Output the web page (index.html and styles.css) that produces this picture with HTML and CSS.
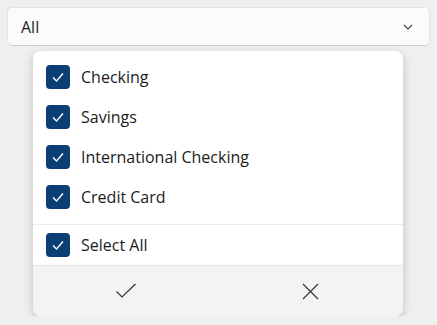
FILE: index.html
```html
<!DOCTYPE html>
<html lang="en">
<head>
    <meta charset="UTF-8">
    <meta name="viewport" content="width=device-width, initial-scale=1.0">
    <title>Account Filter</title>
    <link rel="stylesheet" href="styles.css">
</head>
<body>
    <div class="combo">
        <span class="combo-value">All</span>
        <svg class="chevron" width="12" height="8" viewBox="0 0 12 8">
            <path d="M2 2 L6 6 L10 2" fill="none" stroke="#444" stroke-width="1.2"/>
        </svg>
    </div>

    <div class="popup">
        <div class="options">
            <div class="option"><span class="box"><svg width="14" height="12" viewBox="0 0 14 12"><path d="M2 6.5 L5.5 10 L12 2.5" fill="none" stroke="#fff" stroke-width="1.4"/></svg></span>Checking</div>
            <div class="option"><span class="box"><svg width="14" height="12" viewBox="0 0 14 12"><path d="M2 6.5 L5.5 10 L12 2.5" fill="none" stroke="#fff" stroke-width="1.4"/></svg></span>Savings</div>
            <div class="option"><span class="box"><svg width="14" height="12" viewBox="0 0 14 12"><path d="M2 6.5 L5.5 10 L12 2.5" fill="none" stroke="#fff" stroke-width="1.4"/></svg></span>International Checking</div>
            <div class="option"><span class="box"><svg width="14" height="12" viewBox="0 0 14 12"><path d="M2 6.5 L5.5 10 L12 2.5" fill="none" stroke="#fff" stroke-width="1.4"/></svg></span>Credit Card</div>
        </div>
        <div class="select-all">
            <div class="option"><span class="box"><svg width="14" height="12" viewBox="0 0 14 12"><path d="M2 6.5 L5.5 10 L12 2.5" fill="none" stroke="#fff" stroke-width="1.4"/></svg></span>Select All</div>
        </div>
        <div class="footer">
            <button class="footer-btn">
                <svg width="22" height="16" viewBox="0 0 22 16"><path d="M1.5 8.5 L7 14 L20.5 1" fill="none" stroke="#333" stroke-width="1.2"/></svg>
            </button>
            <button class="footer-btn">
                <svg width="17" height="17" viewBox="0 0 17 17"><path d="M1 1 L16 16 M16 1 L1 16" fill="none" stroke="#333" stroke-width="1.2"/></svg>
            </button>
        </div>
    </div>
</body>
</html>
```

FILE: styles.css
```css
body {
    background-color: #efefef;
    margin: 0;
    padding: 7px 7px 0 7px;
    font-family: "Segoe UI", "Open Sans", "Noto Sans", sans-serif;
    color: #1b1b1b;
}
.combo {
    height: 37px;
    background-color: #fbfbfb;
    border: 1px solid #e4e4e4;
    border-bottom-color: #cfcfcf;
    border-radius: 5px;
    display: flex;
    align-items: center;
    justify-content: space-between;
    padding: 0 15px 0 13px;
}
.combo-value {
    font-size: 16px;
}
.chevron {
    display: block;
}
.popup {
    margin: 5px 27px 0 26px;
    background-color: #fff;
    border-radius: 8px;
    box-shadow: 0 3px 10px rgba(0, 0, 0, 0.2);
    overflow: hidden;
}
.options {
    padding: 6px 0 7px 0;
    border-bottom: 1px solid #ebebeb;
}
.option {
    height: 40px;
    display: flex;
    align-items: center;
    padding-left: 13px;
    font-size: 16px;
}
.box {
    width: 24px;
    height: 24px;
    border-radius: 4px;
    background-color: #0b3f74;
    display: flex;
    align-items: center;
    justify-content: center;
    margin-right: 11px;
}
.select-all {
    border-bottom: 1px solid #e2e2e2;
}
.footer {
    display: flex;
    height: 50px;
    background-color: #f3f3f3;
}
.footer-btn {
    flex: 1;
    border: none;
    background: none;
    display: flex;
    align-items: center;
    justify-content: center;
    padding: 0;
}
```
